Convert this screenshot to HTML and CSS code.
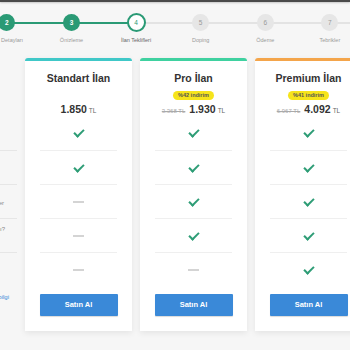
FILE: index.html
```html
<!DOCTYPE html>
<html lang="tr">
<head>
    <meta charset="utf-8">
    <title>İlan Teklifleri</title>
    <link rel="stylesheet" href="styles.css">
</head>
<body>
    <div class="topbar"></div>

    <ol class="steps">
        <li class="step done"><span class="dot">1</span><span class="label">Kategori</span></li>
        <li class="step done"><span class="dot">2</span><span class="label">İlan Detayları</span></li>
        <li class="step done"><span class="dot">3</span><span class="label">Önizleme</span></li>
        <li class="step current"><span class="dot">4</span><span class="label">İlan Teklifleri</span></li>
        <li class="step"><span class="dot">5</span><span class="label">Doping</span></li>
        <li class="step"><span class="dot">6</span><span class="label">Ödeme</span></li>
        <li class="step"><span class="dot">7</span><span class="label">Tebrikler</span></li>
    </ol>

    <div class="plans">
        <div class="features">
            <div class="features-head"></div>
            <div class="feature"></div>
            <div class="feature"></div>
            <div class="feature mid"><span>Anasayfa vitrininde göster</span></div>
            <div class="feature top"><span>Acil listesinde yer alsın mı?</span></div>
            <div class="feature"></div>
            <a href="#" class="more">Paketler hakkında detaylı bilgi</a>
        </div>

        <div class="card standart">
            <h2 class="card-title">Standart İlan</h2>
            <div class="badge hidden">%0 indirim</div>
            <div class="price"><strong>1.850</strong><small>TL</small></div>
            <ul class="rows">
                <li class="yes"></li>
                <li class="yes"></li>
                <li class="no"></li>
                <li class="no"></li>
                <li class="no"></li>
            </ul>
            <a href="#" class="btn">Satın Al</a>
        </div>

        <div class="card pro">
            <h2 class="card-title">Pro İlan</h2>
            <div class="badge">%42 indirim</div>
            <div class="price"><s>3.368 TL</s><strong>1.930</strong><small>TL</small></div>
            <ul class="rows">
                <li class="yes"></li>
                <li class="yes"></li>
                <li class="yes"></li>
                <li class="yes"></li>
                <li class="no"></li>
            </ul>
            <a href="#" class="btn">Satın Al</a>
        </div>

        <div class="card premium">
            <h2 class="card-title">Premium İlan</h2>
            <div class="badge">%41 indirim</div>
            <div class="price"><s>6.967 TL</s><strong>4.092</strong><small>TL</small></div>
            <ul class="rows">
                <li class="yes"></li>
                <li class="yes"></li>
                <li class="yes"></li>
                <li class="yes"></li>
                <li class="yes"></li>
            </ul>
            <a href="#" class="btn">Satın Al</a>
        </div>
    </div>
</body>
</html>
```

FILE: styles.css
```css
html, body {
    margin: 0;
    padding: 0;
    overflow: hidden;
}
body {
    font-family: "Liberation Sans", Arial, sans-serif;
    background-color: #f6f6f6;
    color: #333;
    width: 350px;
    height: 350px;
}
.topbar {
    height: 2px;
    background-color: #4a4a4a;
    box-shadow: 0 1px 2px rgba(0, 0, 0, 0.2);
}

/* stepper */
.steps {
    list-style: none;
    display: flex;
    margin: 12px 0 0 -90px;
    padding: 0;
    height: 44px;
}
.step {
    position: relative;
    flex: 0 0 64.6px;
    display: flex;
    flex-direction: column;
    align-items: center;
}
.step::after {
    content: "";
    position: absolute;
    top: 8px;
    left: 50%;
    width: 100%;
    height: 2px;
    background-color: #e3e3e3;
    z-index: 0;
}
.step.done::after {
    background-color: #2a9a75;
}
.dot {
    position: relative;
    z-index: 1;
    width: 17px;
    height: 17px;
    border-radius: 50%;
    background-color: #e6e6e6;
    color: #999;
    font-size: 6.5px;
    line-height: 17px;
    text-align: center;
    box-sizing: border-box;
}
.step.done .dot {
    background-color: #2a9a75;
    color: #fff;
    font-weight: bold;
}
.step.current .dot {
    background-color: #fff;
    border: 2px solid #2a9a75;
    color: #2a9a75;
    line-height: 15px;
    width: 19px;
    height: 19px;
    margin-top: -1px;
}
.label {
    margin-top: 6px;
    font-size: 5.5px;
    color: #9a9a9a;
    white-space: nowrap;
}
.step.current .label {
    margin-top: 5px;
    color: #666;
}

/* plans */
.plans {
    display: flex;
    gap: 8px;
    margin-left: -103px;
}
.features {
    flex: 0 0 120px;
    display: flex;
    flex-direction: column;
    overflow: hidden;
}
.features-head {
    height: 58px;
}
.feature {
    height: 33px;
    border-top: 1px solid #e6e6e6;
    font-size: 6px;
    color: #888;
    display: flex;
    align-items: center;
    justify-content: flex-end;
    padding-right: 13px;
    white-space: nowrap;
}
.feature:nth-child(2) {
    border-top: none;
    height: 34px;
}
.feature.mid span {
    margin-top: 3px;
}
.feature.top {
    align-items: flex-start;
    padding-right: 12px;
}
.feature.top span {
    margin-top: 7px;
}
.more {
    margin-top: 8px;
    align-self: flex-end;
    padding-right: 8px;
    font-size: 6px;
    color: #3a89d8;
    text-decoration: none;
    white-space: nowrap;
}

.card {
    flex: 0 0 107px;
    background: #fff;
    border-top: 3px solid #40c8c8;
    border-radius: 3px 3px 0 0;
    box-shadow: 0 2px 6px rgba(0, 0, 0, 0.08);
    display: flex;
    flex-direction: column;
    align-items: center;
    padding-bottom: 15px;
}
.card.pro {
    border-top-color: #3fd1a0;
}
.card.premium {
    border-top-color: #f4a54b;
}
.card-title {
    margin: 9px 0 0;
    font-size: 10.5px;
    line-height: 16px;
    font-weight: bold;
    color: #333;
}
.badge {
    margin-top: 5px;
    height: 9px;
    line-height: 9px;
    padding: 0 5px;
    border-radius: 5px;
    background-color: #f6e41b;
    color: #555;
    font-size: 5.5px;
    font-weight: bold;
}
.badge.hidden {
    visibility: hidden;
}
.price {
    height: 14px;
    line-height: 14px;
    margin-top: 1px;
    white-space: nowrap;
}
.price strong {
    font-size: 10.5px;
    color: #333;
}
.price small {
    margin-left: 2px;
    font-size: 6.5px;
    color: #666;
}
.price s {
    margin-right: 4px;
    font-size: 6px;
    color: #aaa;
}
.rows {
    list-style: none;
    margin: 1px 0 0;
    padding: 0;
    width: 100%;
}
.rows li {
    height: 34px;
    margin: 0 15px;
    display: flex;
    align-items: center;
    justify-content: center;
}
.rows li + li {
    border-top: 1px solid #efefef;
    height: 33px;
}
.rows li.yes::before {
    content: "";
    width: 8px;
    height: 4px;
    border-left: 2px solid #2e9d76;
    border-bottom: 2px solid #2e9d76;
    transform: rotate(-45deg);
    margin-top: -2px;
}
.rows li.no::before {
    content: "";
    width: 11px;
    height: 2px;
    background-color: #d4d4d4;
}
.btn {
    margin-top: 8px;
    width: 78px;
    height: 22px;
    line-height: 22px;
    background-color: #3a89d8;
    color: #fff;
    text-align: center;
    font-size: 7.5px;
    font-weight: bold;
    text-decoration: none;
    border-radius: 1px;
    box-shadow: 0 1px 1px rgba(0, 0, 0, 0.15);
}
```
